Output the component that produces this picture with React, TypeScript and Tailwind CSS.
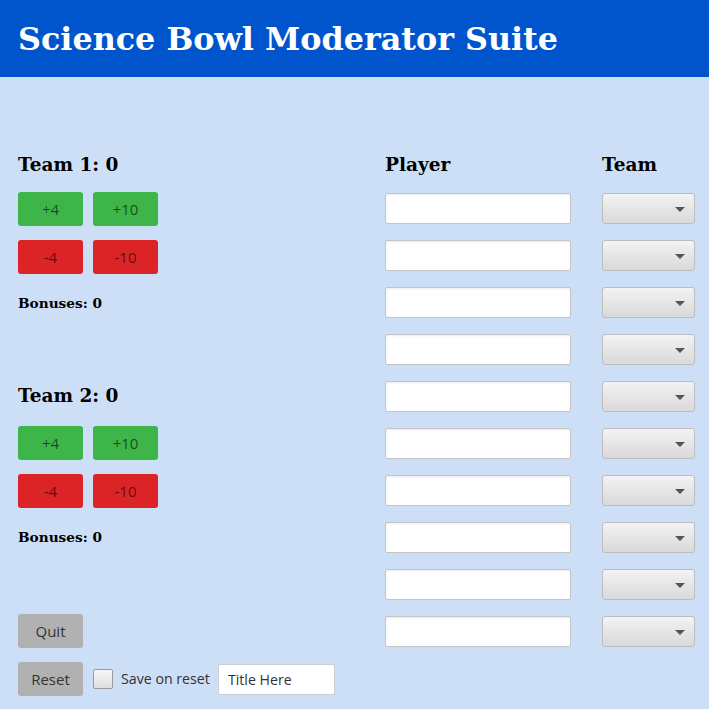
import type { ReactNode } from "react";

const serif = "font-['Georgia','DejaVu_Serif','Liberation_Serif',serif]";
const sans = "font-['Segoe_UI','Open_Sans','Noto_Sans',sans-serif]";

function ScoreButton({ color, children }: { color: "green" | "red" | "gray"; children: ReactNode }) {
  const bg =
    color === "green" ? "bg-[#3eb548]" : color === "red" ? "bg-[#dc2326]" : "bg-[#b1b1b1] text-[#333]";
  return (
    <button
      className={`w-[65px] h-[34px] rounded-[3px] ${bg} ${sans} text-[15px] ${color === "gray" ? "" : "text-black/60"} flex items-center justify-center`}
    >
      {children}
    </button>
  );
}

function TeamBlock({ name, first }: { name: string; first?: boolean }) {
  return (
    <>
      <h2 className={`${serif} font-bold text-[18.5px] leading-[26px] h-[26px] text-black ${first ? "" : "mt-[70px]"}`}>
        {name}: 0
      </h2>
      <div className={`flex gap-[10px] ${first ? "mt-[14px]" : "mt-[17px]"}`}>
        <ScoreButton color="green">+4</ScoreButton>
        <ScoreButton color="green">+10</ScoreButton>
      </div>
      <div className="flex gap-[10px] mt-[14px]">
        <ScoreButton color="red">-4</ScoreButton>
        <ScoreButton color="red">-10</ScoreButton>
      </div>
      <p className={`${serif} font-bold text-[13.7px] leading-[20px] h-[20px] mt-[19px] text-black`}>Bonuses: 0</p>
    </>
  );
}

function TeamSelect() {
  return (
    <div className="relative w-[93px] h-[31px] rounded-[3px] border border-[#bdbdbd] bg-gradient-to-b from-[#f3f3f3] to-[#d9d9d9]">
      <span className="absolute right-[9px] top-[13px] w-0 h-0 border-l-[5px] border-r-[5px] border-t-[5px] border-l-transparent border-r-transparent border-t-[#555]" />
    </div>
  );
}

export default function App() {
  const rows = Array.from({ length: 10 }, (_, i) => i);
  return (
    <div className="min-h-[709px] bg-[#cddff6]">
      <header className="h-[77px] bg-[#0055cc] flex items-center px-[18px]">
        <h1 className={`${serif} font-bold text-white text-[31.8px] leading-none`}>Science Bowl Moderator Suite</h1>
      </header>

      <main className="flex pt-[75px]">
        <section className="w-[385px] pl-[18px] flex flex-col">
          <TeamBlock name="Team 1" first />
          <TeamBlock name="Team 2" />
          <div className="mt-[67px]">
            <ScoreButton color="gray">Quit</ScoreButton>
          </div>
          <div className="mt-[14px] flex items-center">
            <ScoreButton color="gray">Reset</ScoreButton>
            <span className="ml-[10px] w-[20px] h-[20px] rounded-[2px] border border-[#9a9a9a] bg-gradient-to-b from-[#f7f7f7] to-[#dedede]" />
            <span className={`ml-[8px] ${sans} text-[14.2px] text-[#333]`}>Save on reset</span>
            <input
              defaultValue="Title Here"
              className={`ml-[8px] w-[117px] h-[31px] bg-white border border-[#cfcfcf] rounded-[2px] px-[9px] ${sans} text-[14.2px] text-[#333] outline-none`}
            />
          </div>
        </section>

        <section className="w-[186px] flex flex-col">
          <h2 className={`${serif} font-bold text-[18.5px] leading-[26px] h-[26px] text-black`}>Player</h2>
          <div className="mt-[15px] flex flex-col gap-[16px]">
            {rows.map((i) => (
              <input
                key={i}
                className="w-[186px] h-[31px] bg-white border border-[#c4c4c4] rounded-[2px] shadow-[inset_0_1px_2px_rgba(0,0,0,0.08)] outline-none"
              />
            ))}
          </div>
        </section>

        <section className="ml-[31px] w-[93px] flex flex-col">
          <h2 className={`${serif} font-bold text-[18.5px] leading-[26px] h-[26px] text-black`}>Team</h2>
          <div className="mt-[15px] flex flex-col gap-[16px]">
            {rows.map((i) => (
              <TeamSelect key={i} />
            ))}
          </div>
        </section>
      </main>
    </div>
  );
}
